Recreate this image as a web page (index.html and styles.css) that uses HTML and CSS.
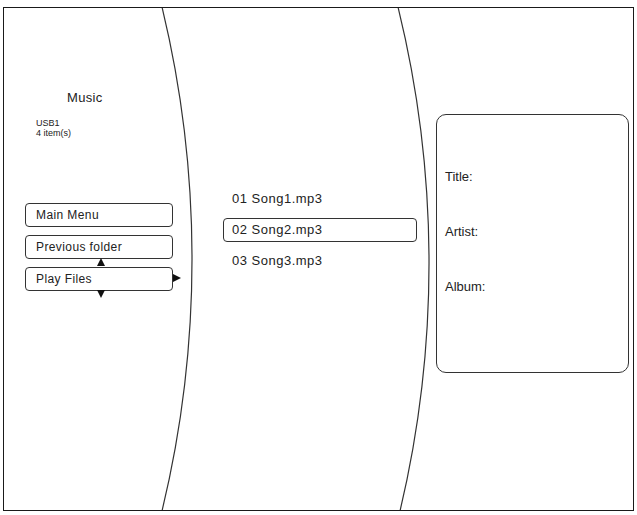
FILE: index.html
```html
<!DOCTYPE html>
<html>
<head>
<meta charset="utf-8">
<title>Music</title>
<link rel="stylesheet" href="styles.css">
</head>
<body>
<div class="screen">
  <svg class="curves" width="629" height="502" viewBox="0 0 629 502">
    <path d="M158 -1 A1073 1073 0 0 1 158 503" fill="none" stroke="#333" stroke-width="1.2"/>
    <path d="M394 -1 A1073 1073 0 0 1 396 503" fill="none" stroke="#333" stroke-width="1.2"/>
  </svg>
  <div class="col col-left">
    <div class="title">Music</div>
    <div class="source">
      <div>USB1</div>
      <div>4 item(s)</div>
    </div>
    <div class="menu">
      <div class="btn">Main Menu</div>
      <div class="btn">Previous folder</div>
      <div class="btn btn-active">Play Files
        <span class="arrow arrow-up"></span>
        <span class="arrow arrow-down"></span>
        <span class="arrow arrow-right"></span>
      </div>
    </div>
  </div>
  <div class="col col-mid">
    <div class="song">01 Song1.mp3</div>
    <div class="song song-sel">02 Song2.mp3</div>
    <div class="song">03 Song3.mp3</div>
  </div>
  <div class="col col-right">
    <div class="info">
      <div class="label">Title:</div>
      <div class="label">Artist:</div>
      <div class="label">Album:</div>
    </div>
  </div>
</div>
</body>
</html>
```

FILE: styles.css
```css
html, body {
  margin: 0;
  padding: 0;
  background: #fff;
}
body {
  font-family: "Liberation Sans", Arial, sans-serif;
  color: #222;
}
.screen {
  position: relative;
  margin: 7px 0 0 3px;
  width: 629px;
  height: 502px;
  border: 1px solid #1a1a1a;
  display: grid;
  grid-template-columns: 188px 238px 203px;
  overflow: hidden;
}
.curves {
  position: absolute;
  left: 0;
  top: 0;
  pointer-events: none;
}
.col {
  display: flex;
  flex-direction: column;
}
.col-left {
  padding-top: 82px;
}
.title {
  font-size: 13px;
  line-height: 15px;
  padding-left: 63px;
  letter-spacing: 0.3px;
}
.source {
  margin-top: 13px;
  padding-left: 32px;
  font-size: 9px;
  line-height: 10px;
}
.menu {
  margin-top: 65px;
  margin-left: 21px;
  display: flex;
  flex-direction: column;
  gap: 8px;
}
.btn {
  position: relative;
  width: 146px;
  height: 22px;
  border: 1px solid #333;
  border-radius: 4px;
  font-size: 12px;
  line-height: 22px;
  padding-left: 10px;
  box-sizing: content-box;
  width: 136px;
  letter-spacing: 0.4px;
}
.arrow {
  position: absolute;
  width: 0;
  height: 0;
}
.arrow-up {
  left: 71px;
  top: -10px;
  border-left: 4px solid transparent;
  border-right: 4px solid transparent;
  border-bottom: 8px solid #111;
}
.arrow-down {
  left: 71px;
  top: 22px;
  border-left: 4px solid transparent;
  border-right: 4px solid transparent;
  border-top: 8px solid #111;
}
.arrow-right {
  left: 147px;
  top: 6px;
  border-top: 4px solid transparent;
  border-bottom: 4px solid transparent;
  border-left: 8px solid #111;
}
.col-mid {
  padding-top: 179px;
  padding-left: 31px;
  gap: 7px;
}
.song {
  width: 184px;
  height: 22px;
  border: 1px solid transparent;
  border-radius: 4px;
  padding-left: 8px;
  font-size: 13px;
  line-height: 22px;
  letter-spacing: 0.5px;
}
.song-sel {
  border-color: #333;
}
.col-right {
  padding-top: 106px;
  padding-left: 6px;
}
.info {
  width: 183px;
  height: 203px;
  border: 1px solid #333;
  border-radius: 10px;
  padding: 54px 0 0 8px;
  display: flex;
  flex-direction: column;
  gap: 40px;
}
.label {
  font-size: 13px;
  line-height: 15px;
}
```
